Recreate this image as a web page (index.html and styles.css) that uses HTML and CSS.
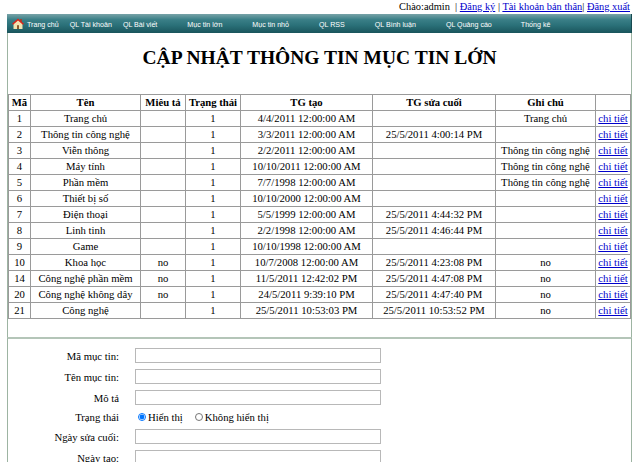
FILE: index.html
```html
<!DOCTYPE html>
<html lang="vi">
<head>
    <meta charset="UTF-8">
    <meta name="viewport" content="width=device-width, initial-scale=1.0">
    <title>Cập nhật mục tin lớn</title>
    <link rel="stylesheet" href="styles.css">
</head>
<body>
    <!-- dong chao + link tai khoan -->
    <div class="top-links">Chào:admin &nbsp;| <a href="#">Đăng ký</a> | <a href="#">Tài khoản bản thân</a>| <a href="#">Đăng xuất</a></div>

    <div class="page">
        <!-- menu quan tri -->
        <ul class="menu">
            <li class="home-icon">
                <svg width="12" height="12" viewBox="0 0 12 12">
                    <path d="M6 1.5 L10.5 5.5 V11 H1.5 V5.5 Z" fill="#f3e3b0"/>
                    <rect x="8.2" y="1" width="1.6" height="3" fill="#b8321f"/>
                    <path d="M6 0.5 L12 5.8 L10.9 6.7 L6 2.4 L1.1 6.7 L0 5.8 Z" fill="#d8261b"/>
                    <rect x="5" y="7.2" width="2" height="3.8" fill="#8a5a2b"/>
                </svg>
            </li>
            <li class="tight"><a href="#">Trang chủ</a></li>
            <li class="tight"><a href="#">QL Tài khoản</a></li>
            <li><a href="#">QL Bài viết</a></li>
            <li><a href="#">Mục tin lớn</a></li>
            <li><a href="#">Mục tin nhỏ</a></li>
            <li><a href="#">QL RSS</a></li>
            <li><a href="#">QL Bình luận</a></li>
            <li class="wide"><a href="#">QL Quảng cáo</a></li>
            <li><a href="#">Thống kê</a></li>
        </ul>

        <!-- danh sach muc tin lon -->
        <div class="content">
            <h1>CẬP NHẬT THÔNG TIN MỤC TIN LỚN</h1>
            <table class="list">
                <colgroup>
                    <col class="c-ma"><col class="c-ten"><col class="c-mieuta"><col class="c-trangthai">
                    <col class="c-tgtao"><col class="c-tgsua"><col class="c-ghichu"><col class="c-link">
                </colgroup>
                <tr><th>Mã</th><th>Tên</th><th>Miêu tả</th><th>Trạng thái</th><th>TG tạo</th><th>TG sửa cuối</th><th>Ghi chú</th><th></th></tr>
                <tr><td>1</td><td>Trang chủ</td><td></td><td>1</td><td>4/4/2011 12:00:00 AM</td><td></td><td>Trang chủ</td><td><a href="#">chi tiết</a></td></tr>
                <tr><td>2</td><td>Thông tin công nghệ</td><td></td><td>1</td><td>3/3/2011 12:00:00 AM</td><td>25/5/2011 4:00:14 PM</td><td></td><td><a href="#">chi tiết</a></td></tr>
                <tr><td>3</td><td>Viễn thông</td><td></td><td>1</td><td>2/2/2011 12:00:00 AM</td><td></td><td>Thông tin công nghệ</td><td><a href="#">chi tiết</a></td></tr>
                <tr><td>4</td><td>Máy tính</td><td></td><td>1</td><td>10/10/2011 12:00:00 AM</td><td></td><td>Thông tin công nghệ</td><td><a href="#">chi tiết</a></td></tr>
                <tr><td>5</td><td>Phần mềm</td><td></td><td>1</td><td>7/7/1998 12:00:00 AM</td><td></td><td>Thông tin công nghệ</td><td><a href="#">chi tiết</a></td></tr>
                <tr><td>6</td><td>Thiết bị số</td><td></td><td>1</td><td>10/10/2000 12:00:00 AM</td><td></td><td></td><td><a href="#">chi tiết</a></td></tr>
                <tr><td>7</td><td>Điện thoại</td><td></td><td>1</td><td>5/5/1999 12:00:00 AM</td><td>25/5/2011 4:44:32 PM</td><td></td><td><a href="#">chi tiết</a></td></tr>
                <tr><td>8</td><td>Linh tinh</td><td></td><td>1</td><td>2/2/1998 12:00:00 AM</td><td>25/5/2011 4:46:44 PM</td><td></td><td><a href="#">chi tiết</a></td></tr>
                <tr><td>9</td><td>Game</td><td></td><td>1</td><td>10/10/1998 12:00:00 AM</td><td></td><td></td><td><a href="#">chi tiết</a></td></tr>
                <tr><td>10</td><td>Khoa học</td><td>no</td><td>1</td><td>10/7/2008 12:00:00 AM</td><td>25/5/2011 4:23:08 PM</td><td>no</td><td><a href="#">chi tiết</a></td></tr>
                <tr><td>14</td><td>Công nghệ phần mềm</td><td>no</td><td>1</td><td>11/5/2011 12:42:02 PM</td><td>25/5/2011 4:47:08 PM</td><td>no</td><td><a href="#">chi tiết</a></td></tr>
                <tr><td>20</td><td>Công nghệ không dây</td><td>no</td><td>1</td><td>24/5/2011 9:39:10 PM</td><td>25/5/2011 4:47:40 PM</td><td>no</td><td><a href="#">chi tiết</a></td></tr>
                <tr><td>21</td><td>Công nghệ</td><td></td><td>1</td><td>25/5/2011 10:53:03 PM</td><td>25/5/2011 10:53:52 PM</td><td>no</td><td><a href="#">chi tiết</a></td></tr>
            </table>
        </div>

        <!-- form nhap muc tin -->
        <div class="form-area">
            <div class="form">
                <label>Mã mục tin:</label>
                <input type="text">
                <label>Tên mục tin:</label>
                <input type="text">
                <label>Mô tả</label>
                <input type="text">
                <label>Trạng thái</label>
                <div class="radios">
                    <input type="radio" name="trangthai" checked> Hiển thị
                    <input type="radio" name="trangthai" class="second"> Không hiển thị
                </div>
                <label>Ngày sửa cuối:</label>
                <input type="text">
                <label>Ngày tạo:</label>
                <input type="text">
            </div>
        </div>
    </div>
</body>
</html>
```

FILE: styles.css
```css
body{
    margin: 0;
    font-family: "Liberation Serif", "Times New Roman", serif;
    font-size: 10.7px;
    color: #000;
    background-color: #fff;
}
a{
    color: #0000cc;
}
.top-links{
    height: 14px;
    line-height: 14px;
    font-size: 10.4px;
    text-align: right;
    padding-right: 10px;
}
.page{
    margin: 0 8px 0 7px;
}
.menu{
    display: flex;
    align-items: center;
    height: 19px;
    margin: 0;
    padding: 0 0 0 5px;
    list-style: none;
    background: linear-gradient(#78a3a8 0%, #3a7f87 30%, #2a7078 60%, #1a555c 100%);
    border-right: 1px solid #164a50;
}
.menu li{
    margin-right: 30px;
    line-height: 12px;
}
.menu li.tight{
    margin-right: 11px;
}
.menu li.wide{
    margin-right: 29px;
}
.menu .home-icon{
    margin-right: 3px;
    height: 12px;
}
.menu a{
    color: #fff;
    text-decoration: none;
    font-family: "Liberation Sans", Tahoma, sans-serif;
    font-size: 7.1px;
}
.content{
    border-left: 1px solid #9db4a2;
    border-right: 1px solid #9db4a2;
    padding-bottom: 18px;
}
h1{
    margin: 0 0 24px 0;
    padding-top: 13px;
    font-size: 19.5px;
    line-height: 24px;
    text-align: center;
}
.list{
    width: 100%;
    border-collapse: collapse;
    table-layout: fixed;
}
.list th, .list td{
    border: 1px solid #9a9a9a;
    height: 15px;
    line-height: 15px;
    padding: 0;
    text-align: center;
    white-space: nowrap;
}
.c-ma{ width: 22px; }
.c-ten{ width: 110px; }
.c-mieuta{ width: 45px; }
.c-trangthai{ width: 55px; }
.c-tgtao{ width: 132px; }
.c-tgsua{ width: 123px; }
.c-ghichu{ width: 100px; }
.c-link{ width: 35px; }
.form-area{
    border-left: 1px solid #9db4a2;
    border-right: 1px solid #9db4a2;
    border-top: 2px solid #b4c5b8;
    padding-top: 9px;
}
.form{
    display: grid;
    grid-template-columns: 111px 246px;
    column-gap: 16px;
    row-gap: 6px;
    align-items: center;
}
.form label{
    text-align: right;
}
.form input[type="text"]{
    box-sizing: border-box;
    height: 15px;
    width: 246px;
    margin: 0;
    border: 1px solid #b8b8b8;
}
.radios{
    display: flex;
    align-items: center;
    height: 12px;
    padding-left: 3px;
}
.radios input{
    width: 8px;
    height: 8px;
    margin: 0 2px 0 0;
}
.radios .second{
    margin-left: 12px;
}
```
